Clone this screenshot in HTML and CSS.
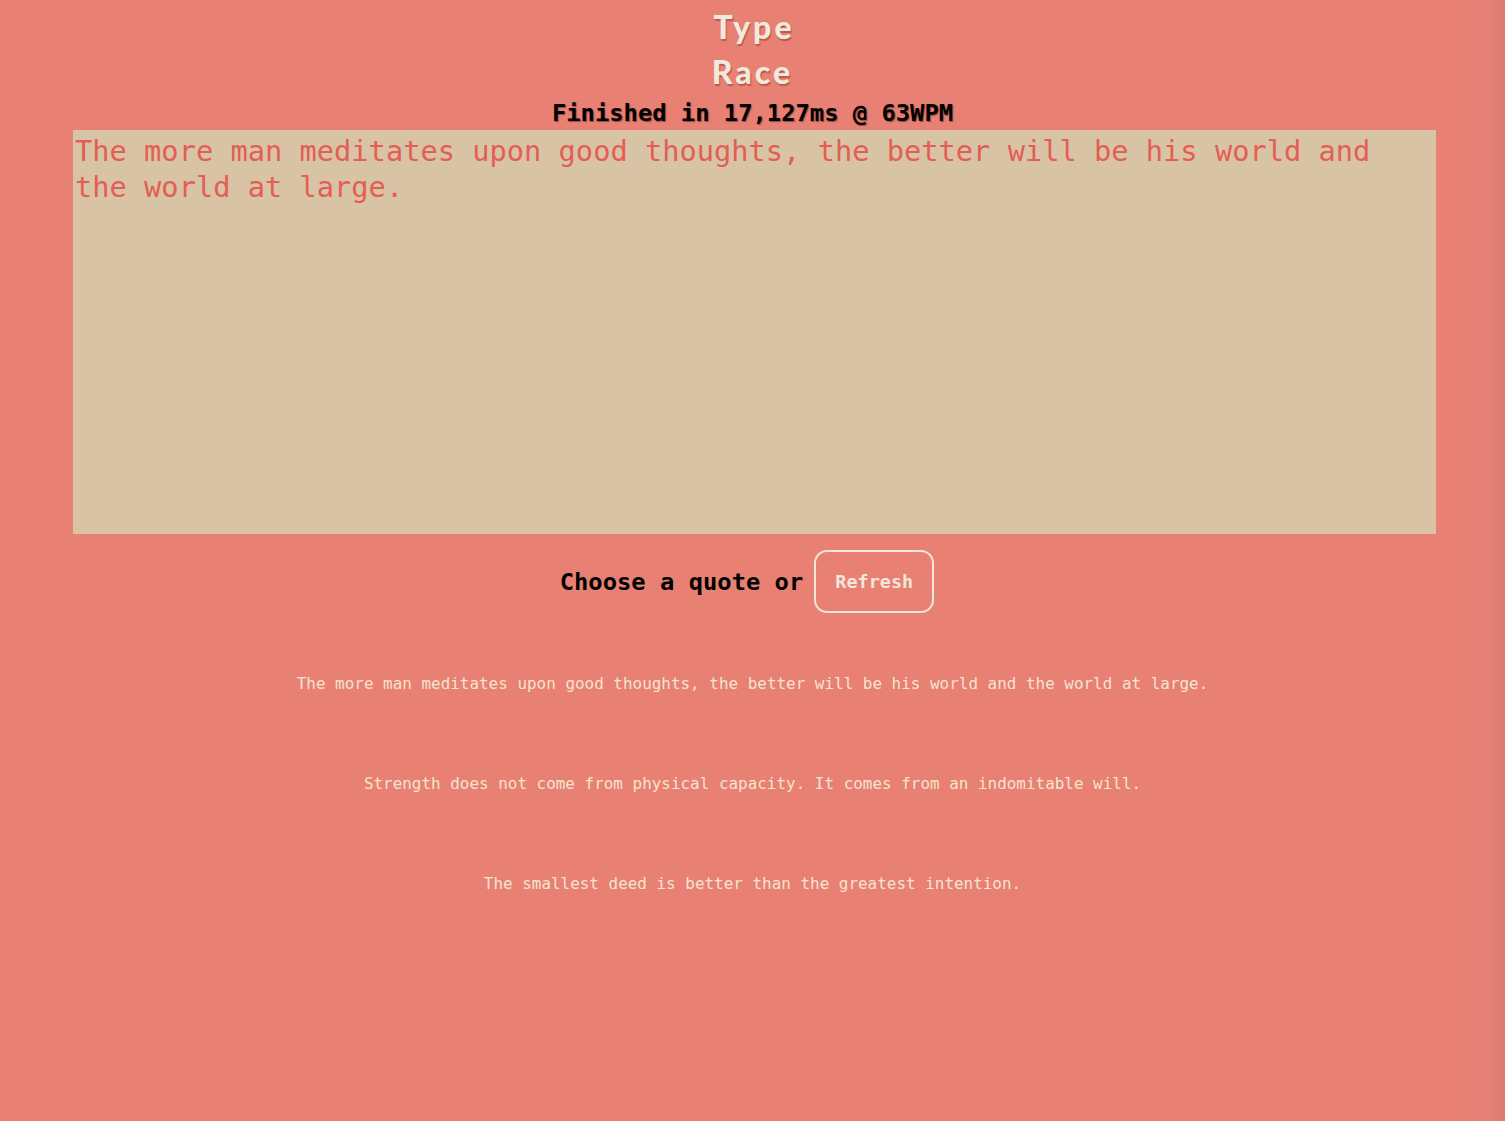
FILE: index.html
```html
<!DOCTYPE html>
<html>
<head>
<meta charset="utf-8">
<link rel="stylesheet" href="styles.css">
</head>
<body>
<div class="page">
  <h1 class="title">Type<br>Race</h1>
  <h2 class="status">Finished in 17,127ms @ 63WPM</h2>
  <div class="board">The more man meditates upon good thoughts, the better will be his world and the world at large.</div>
  <div class="chooser">
    <span class="choose-label">Choose a quote or</span>
    <button class="refresh">Refresh</button>
  </div>
  <ul class="quotes">
    <li class="quote">The more man meditates upon good thoughts, the better will be his world and the world at large.</li>
    <li class="quote">Strength does not come from physical capacity. It comes from an indomitable will.</li>
    <li class="quote">The smallest deed is better than the greatest intention.</li>
  </ul>
</div>
</body>
</html>
```
FILE: styles.css
```css
html, body {
  margin: 0;
  padding: 0;
}
body {
  background: linear-gradient(to right, #e88073 0, #e88073 calc(100% - 40px), #e48277 calc(100% - 15px), #de7a6f 100%);
  min-height: 1121px;
  font-family: "DejaVu Sans Mono", "Liberation Mono", monospace;
}
.page {
  display: flex;
  flex-direction: column;
  align-items: center;
}
.title {
  margin: 4px 0 0 0;
  font-family: Lato, "Noto Sans", sans-serif;
  font-weight: 900;
  font-size: 32px;
  line-height: 45px;
  color: #f1e9dc;
  text-align: center;
  letter-spacing: 3px;
  text-indent: 3px;
  text-shadow: 1px 2px 1px rgba(150, 60, 50, 0.55);
}
.status {
  margin: 2px 0 0 0;
  font-size: 23.8px;
  line-height: 34px;
  font-weight: bold;
  color: #000;
  text-shadow: 1px 1px 1px rgba(60, 20, 20, 0.5);
}
.board {
  align-self: flex-start;
  margin-left: 73px;
  box-sizing: border-box;
  width: 1363px;
  height: 404px;
  background: #d9c3a5;
  color: #e35e54;
  font-size: 28.7px;
  line-height: 36px;
  padding: 3px 2px 0;
}
.chooser {
  display: flex;
  align-items: center;
  gap: 11px;
  margin-top: 16px;
}
.choose-label {
  font-size: 23.8px;
  font-weight: bold;
  color: #000;
}
.refresh {
  width: 120px;
  height: 63px;
  margin-right: 11px;
  border: 2px solid #f1e6d8;
  border-radius: 13px;
  background: transparent;
  color: #f1e6d8;
  font-family: "DejaVu Sans Mono", "Liberation Mono", monospace;
  font-weight: bold;
  font-size: 18.5px;
  padding: 0;
  text-align: center;
}
.quotes {
  list-style: none;
  margin: 61px 0 0 0;
  padding: 0;
  display: flex;
  flex-direction: column;
  gap: 80px;
  align-items: center;
}
.quote {
  font-size: 15.95px;
  line-height: 20px;
  color: #f5e4cf;
}
```
